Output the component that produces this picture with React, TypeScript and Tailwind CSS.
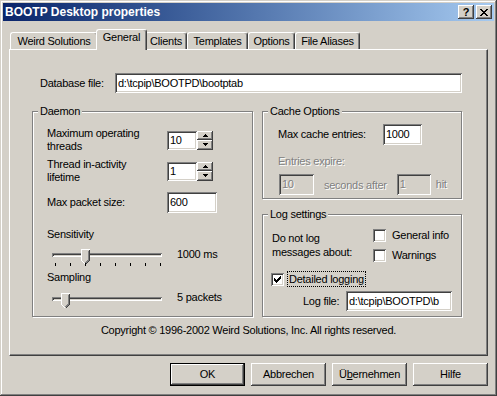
import type { ReactNode } from "react";

// ---------------------------------------------------------------------------
// Classic 3D bevels
// ---------------------------------------------------------------------------

const raised =
  "shadow-[inset_-1px_-1px_#404040,inset_1px_1px_#ffffff,inset_-2px_-2px_#808080,inset_2px_2px_#d4d0c8]";
const sunken =
  "shadow-[inset_1px_1px_#808080,inset_-1px_-1px_#ffffff,inset_2px_2px_#404040,inset_-2px_-2px_#d4d0c8]";
const disabledText = "text-[#808080] [text-shadow:1px_1px_0_#ffffff]";

function Field({
  value,
  className = "",
  disabled = false,
}: {
  value: string;
  className?: string;
  disabled?: boolean;
}) {
  return (
    <div
      className={`flex items-center pl-[3px] whitespace-nowrap overflow-hidden ${sunken} ${
        disabled ? `bg-[#d4d0c8] ${disabledText}` : "bg-white"
      } ${className}`}
    >
      {value}
    </div>
  );
}

function SpinButton({ up }: { up?: boolean }) {
  return (
    <div className={`flex-1 flex items-center justify-center bg-[#d4d0c8] ${raised}`}>
      <svg width="5" height="3" viewBox="0 0 5 3" shapeRendering="crispEdges">
        {up ? (
          <path d="M2 0h1v1H2z M1 1h3v1H1z M0 2h5v1H0z" fill="#000" />
        ) : (
          <path d="M0 0h5v1H0z M1 1h3v1H1z M2 2h1v1H2z" fill="#000" />
        )}
      </svg>
    </div>
  );
}

function Spin({ value }: { value: string }) {
  return (
    <div className="flex h-[19px]">
      <Field value={value} className="w-[30px] h-[19px]" />
      <div className="flex flex-col w-[16px] h-[19px]">
        <SpinButton up />
        <SpinButton />
      </div>
    </div>
  );
}

function Group({
  title,
  className = "",
  children,
}: {
  title: string;
  className?: string;
  children?: ReactNode;
}) {
  return (
    <div
      className={`relative border border-[#808080] shadow-[inset_1px_1px_#ffffff,1px_1px_#ffffff] ${className}`}
    >
      <span className="absolute -top-[7px] left-[5px] bg-[#d4d0c8] px-[2px]">{title}</span>
      {children}
    </div>
  );
}

function Checkbox({ checked }: { checked?: boolean }) {
  return (
    <div className={`w-[13px] h-[13px] shrink-0 bg-white flex items-center justify-center ${sunken}`}>
      {checked && (
        <svg width="7" height="7" viewBox="0 0 7 7" shapeRendering="crispEdges">
          <path
            d="M6 0h1v1H6z M5 1h2v1H5z M0 2h1v1H0z M4 2h3v1H4z M0 3h2v1H0z M3 3h3v1H3z M0 4h5v1H0z M1 5h3v1H1z M2 6h1v1H2z"
            fill="#000"
          />
        </svg>
      )}
    </div>
  );
}

/** Trackbar: thumb offset (px) from the left of the control. */
function Slider({ thumb, ticks }: { thumb: number; ticks?: boolean }) {
  return (
    <div className={`relative w-[118px] ${ticks ? "h-[19px]" : "h-[16px]"}`}>
      <div className={`absolute left-[4px] right-[4px] top-[5px] h-[4px] bg-[#d4d0c8] ${sunken}`} />
      <svg
        className="absolute top-[1px]"
        style={{ left: thumb }}
        width="9"
        height="16"
        viewBox="0 0 9 16"
        shapeRendering="crispEdges"
      >
        <polygon points="0,0 9,0 9,11 4.5,16 0,11" fill="#d4d0c8" />
        <polyline points="4.5,15.5 0.5,11.5 0.5,0.5 8.5,0.5" stroke="#ffffff" fill="none" />
        <polyline points="8.5,0.5 8.5,11.5 4.5,15.5" stroke="#404040" fill="none" />
        <polyline points="7.5,1.5 7.5,11 4.5,14" stroke="#808080" fill="none" />
      </svg>
      {ticks &&
        [7, 22, 37, 52, 67, 82, 97, 112].map((x) => (
          <div key={x} className="absolute top-[15px] w-[1px] h-[3px] bg-black" style={{ left: x }} />
        ))}
    </div>
  );
}

// ---------------------------------------------------------------------------
// Window chrome
// ---------------------------------------------------------------------------

function TitleBar() {
  return (
    <div className="h-[18px] flex items-center justify-between pl-[2px] pr-[2px] bg-gradient-to-r from-[#0a246a] to-[#a6caf0]">
      <span className="font-bold text-white text-[12px] tracking-[0px]">BOOTP Desktop properties</span>
      <div className="flex gap-[2px]">
        <div className={`w-[16px] h-[14px] bg-[#d4d0c8] flex items-center justify-center font-bold text-[11px] leading-none ${raised}`}>
          ?
        </div>
        <div className={`w-[16px] h-[14px] bg-[#d4d0c8] flex items-center justify-center ${raised}`}>
          <svg width="8" height="7" viewBox="0 0 8 7" shapeRendering="crispEdges">
            <path
              d="M0 0h2v1H0z M6 0h2v1H6z M1 1h2v1H1z M5 1h2v1H5z M2 2h4v1H2z M3 3h2v1H3z M2 4h4v1H2z M1 5h2v1H1z M5 5h2v1H5z M0 6h2v1H0z M6 6h2v1H6z"
              fill="#000"
            />
          </svg>
        </div>
      </div>
    </div>
  );
}

const tabs = [
  { label: "Weird Solutions", w: "w-[88px]" },
  { label: "General", w: "w-[51px]", active: true },
  { label: "Clients", w: "w-[42px]" },
  { label: "Templates", w: "w-[61px]" },
  { label: "Options", w: "w-[47px]" },
  { label: "File Aliases", w: "w-[65px]" },
];

function Tabs() {
  return (
    <div className="flex items-end h-[20px] mt-[8px] pl-[1px]">
      {tabs.map((t) =>
        t.active ? (
          <div
            key={t.label}
            className={`${t.w} -mx-[2px] h-[21px] -mb-[1px] relative z-10 bg-[#d4d0c8] rounded-t-[3px] border-t border-l border-white border-r border-r-[#404040] shadow-[inset_-1px_0_#808080] flex justify-center pt-[1px]`}
          >
            {t.label}
          </div>
        ) : (
          <div
            key={t.label}
            className={`${t.w} h-[17px] bg-[#d4d0c8] rounded-t-[3px] border-t border-l border-white border-r border-r-[#404040] shadow-[inset_-1px_0_#808080] flex justify-center pt-[2px]`}
          >
            {t.label}
          </div>
        ),
      )}
    </div>
  );
}

function Button({ children, isDefault }: { children: ReactNode; isDefault?: boolean }) {
  return (
    <div
      className={`w-[75px] h-[23px] flex items-center justify-center bg-[#d4d0c8] ${
        isDefault ? "border border-black" : ""
      } ${raised}`}
    >
      {children}
    </div>
  );
}

// ---------------------------------------------------------------------------
// Page
// ---------------------------------------------------------------------------

export default function App() {
  return (
    <div className="w-[497px] h-[396px] p-[3px] bg-[#d4d0c8] text-black text-[11px] leading-[13px] tracking-[-0.25px] font-['Liberation_Sans',Arial,sans-serif] shadow-[inset_-1px_-1px_#404040,inset_1px_1px_#d4d0c8,inset_-2px_-2px_#808080,inset_2px_2px_#ffffff]">
      <TitleBar />
      <div className="px-[6px]">
        <Tabs />

        {/* Tab panel */}
        <div className="h-[307px] border-t border-l border-white border-r border-b border-r-[#404040] border-b-[#404040] shadow-[inset_-1px_-1px_#808080] flex flex-col">
          <div className="flex items-center mt-[23px] ml-[30px] h-[20px]">
            <span className="w-[75px]">Database file:</span>
            <Field value="d:\tcpip\BOOTPD\bootptab" className="w-[347px] h-[20px]" />
          </div>

          <div className="flex mt-[18px] ml-[22px] gap-[9px]">
            {/* Daemon */}
            <Group title="Daemon" className="w-[221px] h-[206px]">
              <div className="flex flex-col pl-[14px] pt-[15px]">
                <div className="flex items-center">
                  <span className="w-[120px]">
                    Maximum operating
                    <br />
                    threads
                  </span>
                  <Spin value="10" />
                </div>
                <div className="flex items-center mt-[5px]">
                  <span className="w-[120px]">
                    Thread in-activity
                    <br />
                    lifetime
                  </span>
                  <Spin value="1" />
                </div>
                <div className="flex items-center mt-[8px]">
                  <span className="w-[120px]">Max packet size:</span>
                  <Field value="600" className="w-[50px] h-[21px]" />
                </div>

                <span className="mt-[15px]">Sensitivity</span>
                <div className="flex items-start mt-[7px] ml-[1px]">
                  <Slider thumb={33} ticks />
                  <span className="ml-[11px]">1000 ms</span>
                </div>

                <span className="mt-[4px]">Sampling</span>
                <div className="flex items-start mt-[8px] ml-[1px]">
                  <Slider thumb={13} />
                  <span className="ml-[11px] -mt-[1px]">5 packets</span>
                </div>
              </div>
            </Group>

            <div className="flex flex-col gap-[15px] w-[200px]">
              {/* Cache */}
              <Group title="Cache Options" className="h-[88px]">
                <div className="flex flex-col pl-[15px] pt-[12px]">
                  <div className="flex items-center">
                    <span className="w-[105px]">Max cache entries:</span>
                    <Field value="1000" className="w-[39px] h-[21px]" />
                  </div>
                  <span className={`mt-[10px] ${disabledText}`}>Entries expire:</span>
                  <div className="flex items-center mt-[6px] ml-[1px]">
                    <Field value="10" disabled className="w-[35px] h-[21px]" />
                    <span className={`ml-[10px] mt-[2px] ${disabledText}`}>seconds after</span>
                    <Field value="1" disabled className="ml-[10px] w-[34px] h-[21px]" />
                    <span className={`ml-[5px] ${disabledText}`}>hit</span>
                  </div>
                </div>
              </Group>

              {/* Log */}
              <Group title="Log settings" className="h-[103px]">
                <div className="flex flex-col pl-[9px] pt-[14px]">
                  <div className="flex items-start">
                    <span className="w-[101px] mt-[2px] leading-[14px]">
                      Do not log
                      <br />
                      messages about:
                    </span>
                    <div className="flex flex-col gap-[7px]">
                      <div className="flex items-center gap-[6px]">
                        <Checkbox />
                        <span>General info</span>
                      </div>
                      <div className="flex items-center gap-[6px]">
                        <Checkbox />
                        <span>Warnings</span>
                      </div>
                    </div>
                  </div>
                  <div className="flex items-center mt-[9px] -ml-[1px] h-[16px]">
                    <Checkbox checked />
                    <span className="ml-[3px] h-[16px] px-[1px] flex items-center border border-dotted border-black">
                      Detailed logging
                    </span>
                  </div>
                  <div className="flex items-center mt-[4px] ml-[31px]">
                    <span className="w-[43px]">Log file:</span>
                    <Field value="d:\tcpip\BOOTPD\b" className="w-[106px] h-[20px]" />
                  </div>
                </div>
              </Group>
            </div>
          </div>

          <p className="mt-[7px] text-center">
            Copyright © 1996-2002 Weird Solutions, Inc. All rights reserved.
          </p>
        </div>

        {/* Dialog buttons */}
        <div className="flex justify-end gap-[6px] mt-[7px]">
          <Button isDefault>OK</Button>
          <Button>Abbrechen</Button>
          <Button>
            Ü<u>b</u>ernehmen
          </Button>
          <Button>Hilfe</Button>
        </div>
      </div>
    </div>
  );
}
